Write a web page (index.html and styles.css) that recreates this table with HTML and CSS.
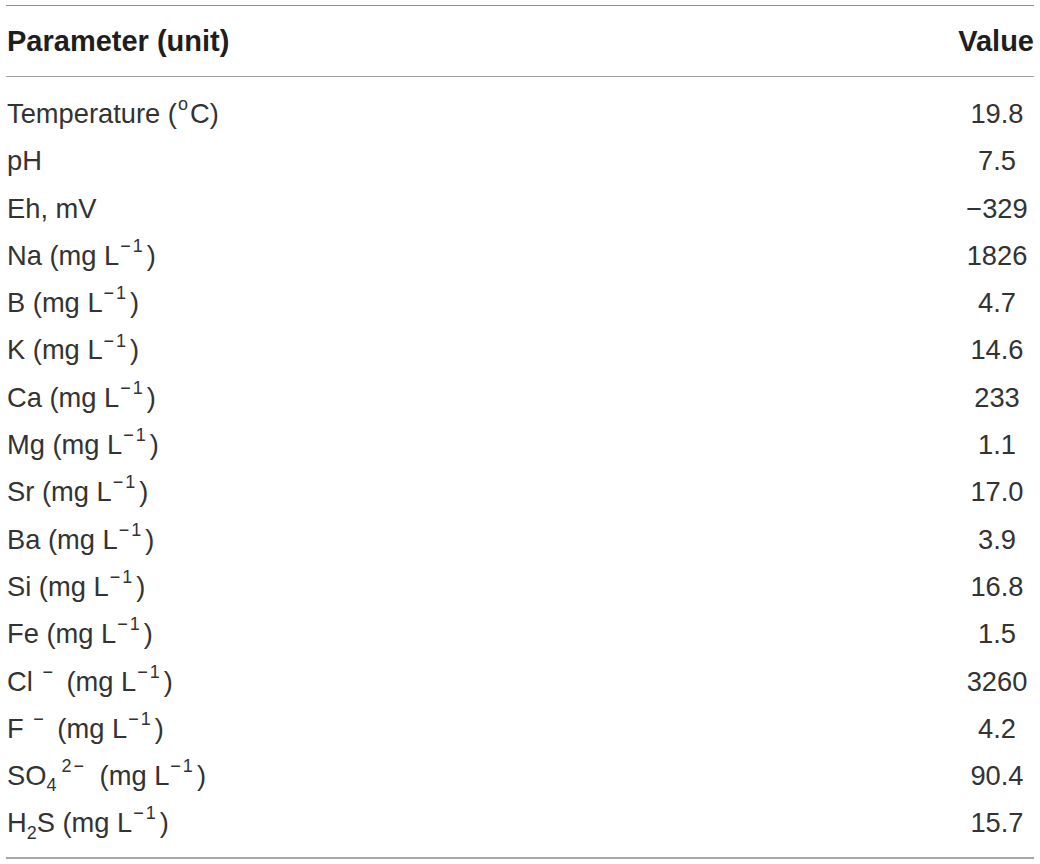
FILE: index.html
```html
<!DOCTYPE html>
<html>
<head>
<meta charset="utf-8">
<link rel="stylesheet" href="styles.css">
</head>
<body>
<table class="data">
  <thead>
    <tr><th class="param">Parameter (unit)</th><th class="val">Value</th></tr>
  </thead>
  <tbody>
    <tr class="first"><td>Temperature (<sup class="deg">o</sup>C)</td><td class="num">19.8</td></tr>
    <tr><td>pH</td><td class="num">7.5</td></tr>
    <tr><td>Eh, mV</td><td class="num">&minus;329</td></tr>
    <tr><td>Na (mg L<sup>&minus;1</sup>)</td><td class="num">1826</td></tr>
    <tr><td>B (mg L<sup>&minus;1</sup>)</td><td class="num">4.7</td></tr>
    <tr><td>K (mg L<sup>&minus;1</sup>)</td><td class="num">14.6</td></tr>
    <tr><td>Ca (mg L<sup>&minus;1</sup>)</td><td class="num">233</td></tr>
    <tr><td>Mg (mg L<sup>&minus;1</sup>)</td><td class="num">1.1</td></tr>
    <tr><td>Sr (mg L<sup>&minus;1</sup>)</td><td class="num">17.0</td></tr>
    <tr><td>Ba (mg L<sup>&minus;1</sup>)</td><td class="num">3.9</td></tr>
    <tr><td>Si (mg L<sup>&minus;1</sup>)</td><td class="num">16.8</td></tr>
    <tr><td>Fe (mg L<sup>&minus;1</sup>)</td><td class="num">1.5</td></tr>
    <tr><td>Cl <sup class="ion">&minus;</sup> (mg L<sup>&minus;1</sup>)</td><td class="num">3260</td></tr>
    <tr><td>F <sup class="ion">&minus;</sup> (mg L<sup>&minus;1</sup>)</td><td class="num">4.2</td></tr>
    <tr><td>SO<sub>4</sub><sup class="charge">2&minus;</sup> (mg L<sup>&minus;1</sup>)</td><td class="num">90.4</td></tr>
    <tr class="last"><td>H<sub>2</sub>S (mg L<sup>&minus;1</sup>)</td><td class="num">15.7</td></tr>
  </tbody>
</table>
</body>
</html>
```

FILE: styles.css
```css
html, body {
  margin: 0;
  padding: 0;
  background: #ffffff;
}

body {
  padding: 5px 6px 0 6px;
  font-family: "Liberation Sans", Arial, sans-serif;
  color: #231f20;
}

.data {
  width: 1028px;
  border-collapse: collapse;
  border-top: 1px solid #8f8f8f;
  border-bottom: 2px solid #a8a8a8;
}

.data th {
  font-size: 29px;
  font-weight: bold;
  line-height: 70px;
  height: 70px;
  padding: 0;
  border-bottom: 1px solid #a0a0a0;
  white-space: nowrap;
  color: #1e1e1e;
}

.data th.param {
  text-align: left;
  padding-left: 1px;
}

.data th.val {
  text-align: right;
  width: 78px;
}

.data td {
  font-size: 27.3px;
  font-weight: normal;
  line-height: 47.3px;
  height: 47.3px;
  padding: 0 0 0 1px;
  white-space: nowrap;
  color: #333333;
}

.data td.num {
  text-align: center;
  padding-left: 4px;
}

.data tr.first td {
  padding-top: 13px;
}

.data tr.last td {
  padding-bottom: 10px;
}

sup, sub {
  font-size: 0.66em;
  line-height: 0;
  position: relative;
  vertical-align: baseline;
}

sup {
  top: -0.72em;
  margin-left: 1px;
  margin-right: 2px;
  letter-spacing: 2px;
}

sub {
  top: 0.35em;
}

sup.deg {
  margin-left: 1px;
  margin-right: 2px;
  letter-spacing: 0;
}

sup.ion {
  margin-left: 2px;
  margin-right: 6px;
  letter-spacing: 0;
}

sup.charge {
  margin-left: 5px;
  margin-right: 6px;
}
```
